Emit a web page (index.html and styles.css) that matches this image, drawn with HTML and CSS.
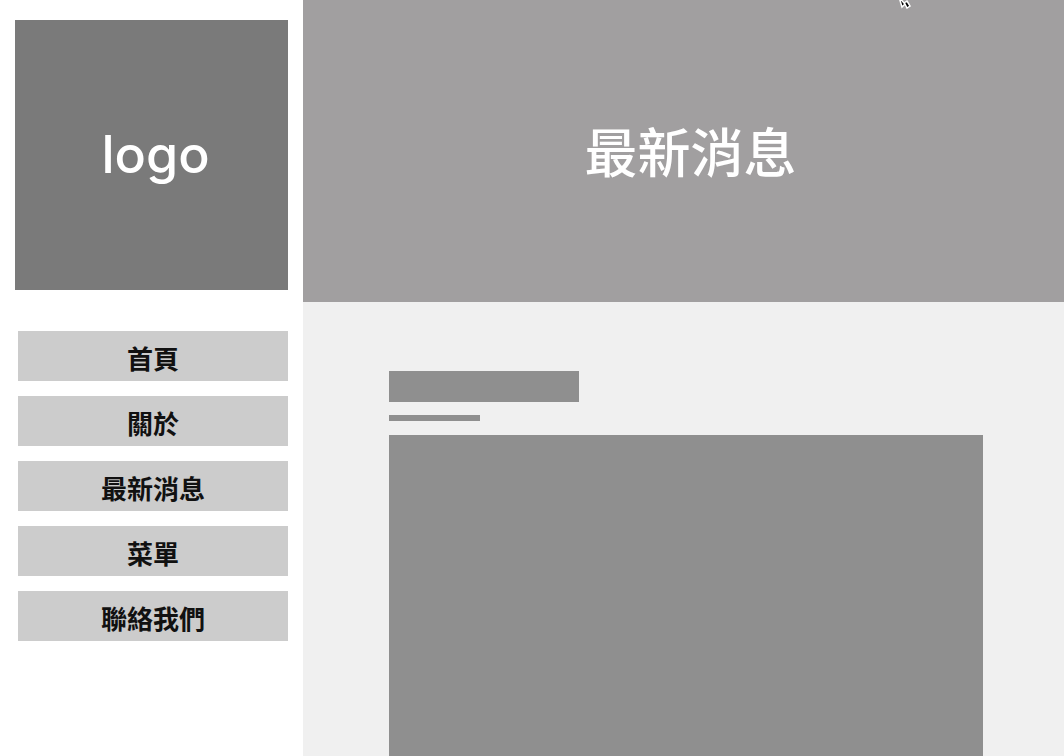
FILE: index.html
```html
<!DOCTYPE html>
<html lang="zh-Hant">
<head>
    <meta charset="UTF-8">
    <meta name="viewport" content="width=device-width, initial-scale=1.0">
    <title>最新消息</title>
    <link rel="stylesheet" href="styles.css">
</head>
<body>
    <div class="page">
        <aside class="sidebar">
            <div class="logo">logo</div>
            <nav class="nav">
                <a class="nav-item" href="#">首頁</a>
                <a class="nav-item" href="#">關於</a>
                <a class="nav-item" href="#">最新消息</a>
                <a class="nav-item" href="#">菜單</a>
                <a class="nav-item" href="#">聯絡我們</a>
            </nav>
        </aside>

        <main class="main">
            <header class="banner">
                <h1>最新消息</h1>
            </header>

            <section class="news">
                <div class="news-title"></div>
                <div class="news-date"></div>
                <div class="news-image"></div>
            </section>
        </main>
    </div>

    <!-- mouse pointer caught in the capture -->
    <svg class="cursor" width="14" height="12" viewBox="0 0 14 12">
        <path d="M1 0 L6 6 L9 4 L12 9 L9 11 L7 7 L4 10 Z" fill="#000" stroke="#fff" stroke-width="1.5"/>
    </svg>
</body>
</html>
```

FILE: styles.css
```css
/* Global Reset */
* {
    margin: 0;
    padding: 0;
    box-sizing: border-box;
}

body {
    font-family: Inter, "Noto Sans", "Noto Sans CJK TC", sans-serif;
    background-color: #fff;
    overflow: hidden;
}

.page {
    display: flex;
    width: 1064px;
    height: 756px;
}

/* Sidebar */
.sidebar {
    width: 303px;
    flex-shrink: 0;
    background-color: #fff;
    padding: 20px 15px 0 15px;
}

.logo {
    width: 273px;
    height: 270px;
    background-color: #7a7a7a;
    color: #fff;
    font-size: 52px;
    font-weight: 500;
    display: flex;
    align-items: center;
    justify-content: center;
    padding-left: 8px;
    padding-bottom: 2px;
}

.nav {
    display: flex;
    flex-direction: column;
    gap: 15px;
    margin-top: 41px;
    padding-left: 3px;
}

.nav-item {
    display: flex;
    align-items: center;
    justify-content: center;
    height: 50px;
    background-color: #cccccc;
    color: #111;
    font-family: "Noto Sans CJK TC", sans-serif;
    font-size: 26px;
    font-weight: 700;
    text-decoration: none;
    padding-top: 2px;
}

/* Main area */
.main {
    flex: 1;
    background-color: #f0f0f0;
    overflow: hidden;
}

.banner {
    height: 302px;
    background-color: #a19fa0;
    display: flex;
    align-items: center;
    justify-content: center;
    padding-left: 14px;
}

.banner h1 {
    color: #fff;
    font-family: "Noto Sans CJK TC", sans-serif;
    font-size: 53px;
    font-weight: 500;
    padding-bottom: 2px;
}

.news {
    padding: 69px 0 0 86px;
}

.news-title {
    width: 190px;
    height: 31px;
    background-color: #8f8f8f;
}

.news-date {
    width: 91px;
    height: 6px;
    margin-top: 13px;
    background-color: #8f8f8f;
}

.news-image {
    width: 594px;
    height: 420px;
    margin-top: 14px;
    background-color: #8f8f8f;
}

.cursor {
    position: absolute;
    left: 898px;
    top: -3px;
}
```
